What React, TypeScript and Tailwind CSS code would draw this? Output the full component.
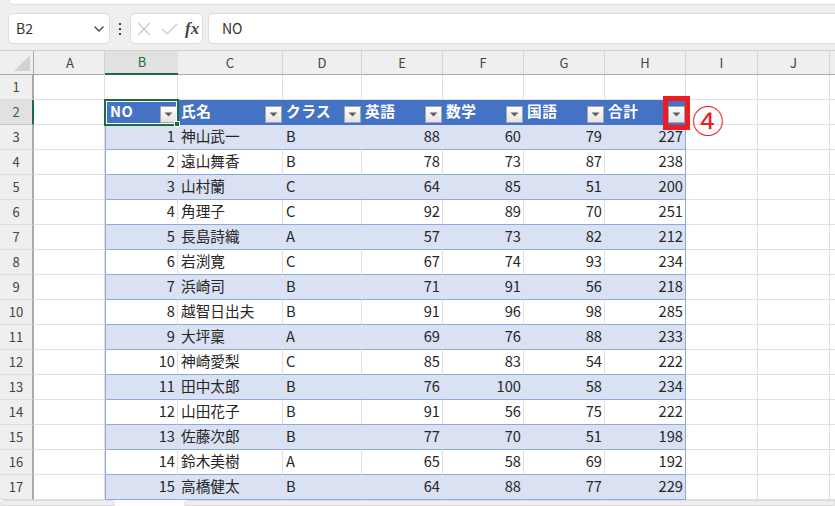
import React from "react";

const cols = [
  { n: "A", w: 71 },
  { n: "B", w: 73 },
  { n: "C", w: 105 },
  { n: "D", w: 79 },
  { n: "E", w: 81 },
  { n: "F", w: 81 },
  { n: "G", w: 81 },
  { n: "H", w: 81 },
  { n: "I", w: 72 },
  { n: "J", w: 72 },
  { n: "", w: 40 },
];

const data: [number, string, string, number, number, number, number][] = [
  [1, "神山武一", "B", 88, 60, 79, 227],
  [2, "遠山舞香", "B", 78, 73, 87, 238],
  [3, "山村蘭", "C", 64, 85, 51, 200],
  [4, "角理子", "C", 92, 89, 70, 251],
  [5, "長島詩織", "A", 57, 73, 82, 212],
  [6, "岩渕寛", "C", 67, 74, 93, 234],
  [7, "浜崎司", "B", 71, 91, 56, 218],
  [8, "越智日出夫", "B", 91, 96, 98, 285],
  [9, "大坪稟", "A", 69, 76, 88, 233],
  [10, "神崎愛梨", "C", 85, 83, 54, 222],
  [11, "田中太郎", "B", 76, 100, 58, 234],
  [12, "山田花子", "B", 91, 56, 75, 222],
  [13, "佐藤次郎", "B", 77, 70, 51, 198],
  [14, "鈴木美樹", "A", 65, 58, 69, 192],
  [15, "高橋健太", "B", 64, 88, 77, 229],
];

const headers = ["NO", "氏名", "クラス", "英語", "数学", "国語", "合計"];

function Filter() {
  return (
    <span className="absolute right-[0px] bottom-[1px] flex h-[17px] w-[17px] items-center justify-center border border-[#a6a6a6] bg-gradient-to-b from-white to-[#e4e4e4]">
      <svg width="9" height="5" viewBox="0 0 9 5">
        <path d="M0.5 0.5H8.5L4.5 4.5Z" fill="#5f5f5f" />
      </svg>
    </span>
  );
}

function RowHead({ n, active }: { n: number; active?: boolean }) {
  return (
    <div
      className={`flex h-[25px] w-[34px] shrink-0 items-center justify-center border-b border-r-2 text-[13px] ${
        active
          ? "border-b-[#c6c6c6] border-r-[#1d6b41] bg-[#e1e1e1] text-[#1d6b41]"
          : "border-b-[#dcdcdc] border-r-[#a9a9a9] bg-[#efefef] text-[#444444]"
      }`}
    >
      {n}
    </div>
  );
}

function Cell({ w, className = "", children }: { w: number; className?: string; children?: React.ReactNode }) {
  return (
    <div
      style={{ width: w }}
      className={`relative flex h-[25px] shrink-0 items-center whitespace-nowrap border-b border-r pb-[3px] ${className}`}
    >
      {children}
    </div>
  );
}

const blank = "border-[#e0e0e0] bg-white";

export default function App() {
  return (
    <div
      className="flex h-[506px] w-[835px] flex-col overflow-hidden bg-[#efefef] text-[14.67px] text-[#262626]"
      style={{ fontFamily: '"Noto Sans CJK JP", "Noto Sans", sans-serif' }}
    >
      {/* ribbon edge */}
      <div className="ml-[9px] h-[5px] shrink-0 rounded-bl-lg border-b border-l border-[#dddddd] bg-white" />

      {/* formula bar */}
      <div className="mt-[8px] flex h-[31px] shrink-0 items-center pl-[8px]">
        <div className="flex h-[31px] w-[102px] items-center justify-between rounded-[5px] border border-[#dcdcdc] bg-white pl-[7px] pr-[4px] text-[14px] text-[#333333]">
          <span>B2</span>
          <svg width="12" height="8" viewBox="0 0 12 8">
            <path d="M1.5 1.5L6 6L10.5 1.5" fill="none" stroke="#444444" strokeWidth="1.3" />
          </svg>
        </div>
        <svg className="ml-[8px] mr-[8px]" width="4" height="12" viewBox="0 0 4 12">
          <rect x="1" y="0" width="2" height="2" fill="#444444" />
          <rect x="1" y="5" width="2" height="2" fill="#444444" />
          <rect x="1" y="10" width="2" height="2" fill="#444444" />
        </svg>
        <div className="flex h-[31px] w-[73px] items-center gap-[10px] rounded-[5px] border border-[#dcdcdc] bg-white pl-[6px]">
          <svg width="14" height="14" viewBox="0 0 14 14">
            <path d="M1 1L13 13M13 1L1 13" stroke="#c8c8c8" strokeWidth="1.2" fill="none" />
          </svg>
          <svg width="17" height="14" viewBox="0 0 17 14">
            <path d="M1 7L6 12L16 2" stroke="#c8c8c8" strokeWidth="1.2" fill="none" />
          </svg>
          <span
            className="-ml-[3px] text-[17px] font-bold italic leading-none text-[#444444]"
            style={{ fontFamily: '"Liberation Serif", serif' }}
          >
            fx
          </span>
        </div>
        <div className="ml-[5px] flex h-[31px] flex-1 items-center rounded-l-[5px] border border-r-0 border-[#dcdcdc] bg-white pl-[13px] text-[14px] text-[#333333]">
          NO
        </div>
      </div>

      {/* sheet */}
      <div className="relative mt-[6px] flex-1 overflow-hidden">
        {/* column header */}
        <div className="flex h-[25px] border-t border-[#d0d0d0]">
          <div className="relative h-[24px] w-[34px] shrink-0 border-b border-r border-[#a9a9a9]">
            <svg className="absolute bottom-[3px] right-[3px]" width="16" height="16" viewBox="0 0 16 16">
              <path d="M16 0V16H0Z" fill="#d2d2d2" />
            </svg>
          </div>
          {cols.map((c) => (
            <div
              key={c.n}
              style={{ width: c.w }}
              className={`flex h-[24px] shrink-0 items-center justify-center text-[13px] ${
                c.n === "A" ? "pl-[2px]" : ""
              } ${
                c.n === "B"
                  ? "border-b-2 border-[#1d6b41] bg-[#e1e1e1] pl-[1px] text-[#1d6b41]"
                  : "border-b border-r border-b-[#a9a9a9] border-r-[#d4d4d4] text-[#444444]"
              }`}
            >
              {c.n}
            </div>
          ))}
        </div>

        {/* row 1 */}
        <div className="flex">
          <RowHead n={1} />
          {cols.map((c) => (
            <Cell key={c.n} w={c.w} className={blank} />
          ))}
        </div>

        {/* row 2: table header */}
        <div className="flex">
          <RowHead n={2} active />
          <Cell w={71} className={blank} />
          {headers.map((h, i) => (
            <Cell
              key={h}
              w={cols[i + 1].w}
              className={`border-[#4472c4] bg-[#4472c4] font-bold tracking-[0.5px] text-white ${i === 0 ? "pl-[5px]" : "pl-[3px]"}`}
            >
              {h}
              <Filter />
            </Cell>
          ))}
          <Cell w={72} className={blank} />
          <Cell w={72} className={blank} />
          <Cell w={40} className={blank} />
        </div>

        {/* data rows */}
        {data.map((r, i) => {
          const band = i % 2 === 0;
          const cls = band
            ? "border-b-[#8ea9db] border-r-transparent bg-[#d9e1f2]"
            : "border-b-[#8ea9db] border-r-[#e0e0e0] bg-white";
          return (
            <div className="flex" key={r[0]}>
              <RowHead n={i + 3} />
              <Cell w={71} className={blank} />
              <Cell w={73} className={`${cls} justify-end border-l border-l-[#8ea9db] pr-[2px]`}>
                {r[0]}
              </Cell>
              <Cell w={105} className={`${cls} pl-[3px]`}>
                {r[1]}
              </Cell>
              <Cell w={79} className={`${cls} pl-[3px]`}>
                {r[2]}
              </Cell>
              {[r[3], r[4], r[5]].map((v, k) => (
                <Cell key={k} w={81} className={`${cls} justify-end pr-[2px]`}>
                  {v}
                </Cell>
              ))}
              <Cell w={81} className={`${band ? "bg-[#d9e1f2]" : "bg-white"} justify-end border-b-[#8ea9db] border-r-[#8ea9db] pr-[2px]`}>
                {r[6]}
              </Cell>
              <Cell w={72} className={blank} />
              <Cell w={72} className={blank} />
              <Cell w={40} className={blank} />
            </div>
          );
        })}

        {/* B2 selection */}
        <div className="absolute left-[104px] top-[49px] h-[27px] w-[75px] border-2 border-[#1d6b41] outline outline-1 -outline-offset-[3px] outline-white">
          <div className="absolute -bottom-[3px] -right-[3px] h-[6px] w-[6px] border border-white bg-[#1d6b41]" />
        </div>

        {/* annotation */}
        <div className="absolute left-[663px] top-[46px] h-[34px] w-[27px] border-[5px] border-[#ed1c24]" />
        <div
          className="absolute left-[692px] top-[49px] text-[32px] leading-[40px] text-[#ed1c24]"
          style={{ fontFamily: '"Noto Sans CJK JP", sans-serif' }}
        >
          ④
        </div>
      </div>

      {/* sheet tab strip */}
      <div className="flex h-[6px] shrink-0 bg-white">
        <div className="h-full w-[115px] rounded-t-[4px] border border-[#dcdcdc] bg-[#efefef]" />
        <div className="w-[69px]" />
        <div className="h-full flex-1 rounded-tl-[4px] border border-[#dcdcdc] bg-[#efefef]" />
      </div>
    </div>
  );
}
